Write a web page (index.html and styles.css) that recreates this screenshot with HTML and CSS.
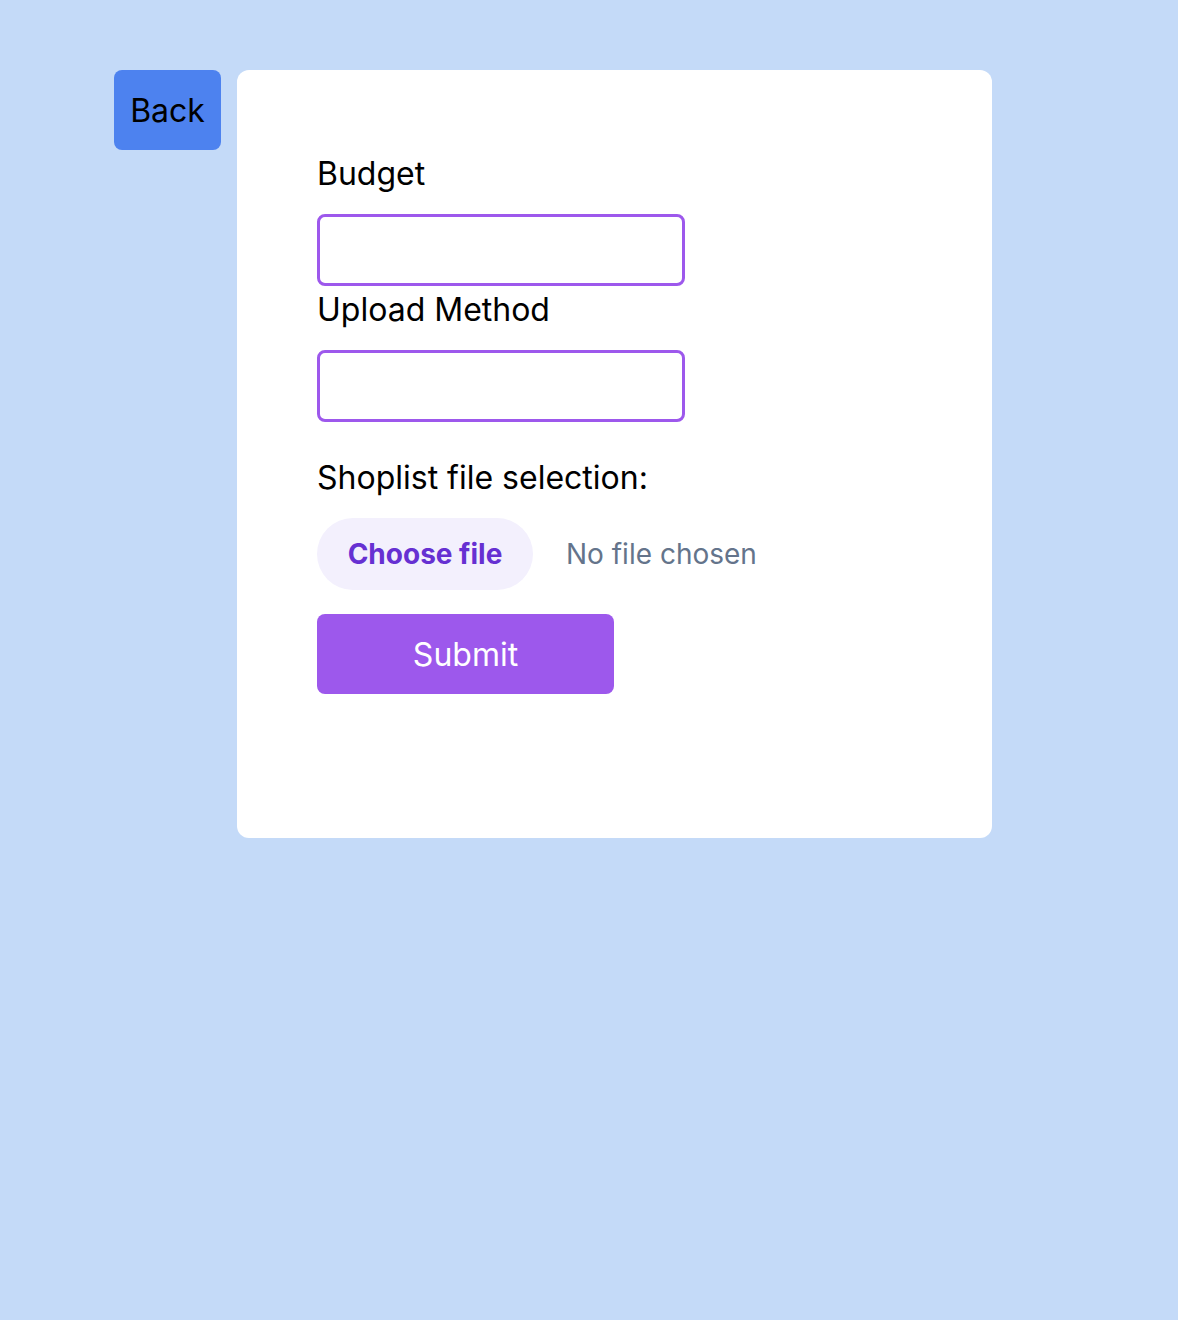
FILE: index.html
```html
<!DOCTYPE html>
<html lang="en">
<head>
<meta charset="utf-8">
<title>Shoplist</title>
<link rel="stylesheet" href="styles.css">
</head>
<body>
<div class="page">
  <button class="back">Back</button>
  <div class="card">
    <label class="label">Budget</label>
    <input class="field" type="text">
    <label class="label label-tight">Upload Method</label>
    <input class="field" type="text">
    <label class="label label-file">Shoplist file selection:</label>
    <div class="file-row">
      <span class="file-btn">Choose file</span>
      <span class="file-name">No file chosen</span>
    </div>
    <button class="submit">Submit</button>
  </div>
</div>
</body>
</html>
```
FILE: styles.css
```css
html, body {
  margin: 0;
  padding: 0;
}
body {
  background: #c4daf8;
  font-family: Inter, "Noto Sans", sans-serif;
  min-height: 1320px;
}
.page {
  display: flex;
  align-items: flex-start;
  gap: 16px;
  padding: 70px 0 0 114px;
}
.back {
  width: 107px;
  height: 80px;
  background: #4d82ef;
  border: none;
  border-radius: 8px;
  font-family: inherit;
  font-size: 32px;
  color: #000;
  padding: 0;
}
.card {
  width: 755px;
  height: 768px;
  box-sizing: border-box;
  background: #fff;
  border-radius: 12px;
  padding: 84px 80px 0 80px;
  display: flex;
  flex-direction: column;
  align-items: flex-start;
}
.label {
  font-size: 32px;
  line-height: 40px;
  color: #000;
  margin-bottom: 20px;
}
.label-tight {
  margin-top: 4px;
}
.label-file {
  margin-top: 36px;
}
.field {
  width: 368px;
  height: 72px;
  box-sizing: border-box;
  border: 3px solid #9d58ec;
  border-radius: 8px;
  outline: none;
  font-family: inherit;
  font-size: 24px;
  padding: 0 12px;
  margin: 0;
}
.file-row {
  display: flex;
  align-items: center;
  gap: 33px;
  margin-bottom: 24px;
}
.file-btn {
  width: 216px;
  height: 72px;
  box-sizing: border-box;
  border-radius: 36px;
  background: #f3f0fd;
  color: #6630d2;
  font-weight: 700;
  font-size: 28px;
  display: flex;
  align-items: center;
  justify-content: center;
}
.file-name {
  color: #64748b;
  font-size: 28px;
}
.submit {
  width: 297px;
  height: 80px;
  background: #9d58ec;
  color: #fff;
  border: none;
  border-radius: 8px;
  font-family: inherit;
  font-size: 32px;
  padding: 0;
}
```
